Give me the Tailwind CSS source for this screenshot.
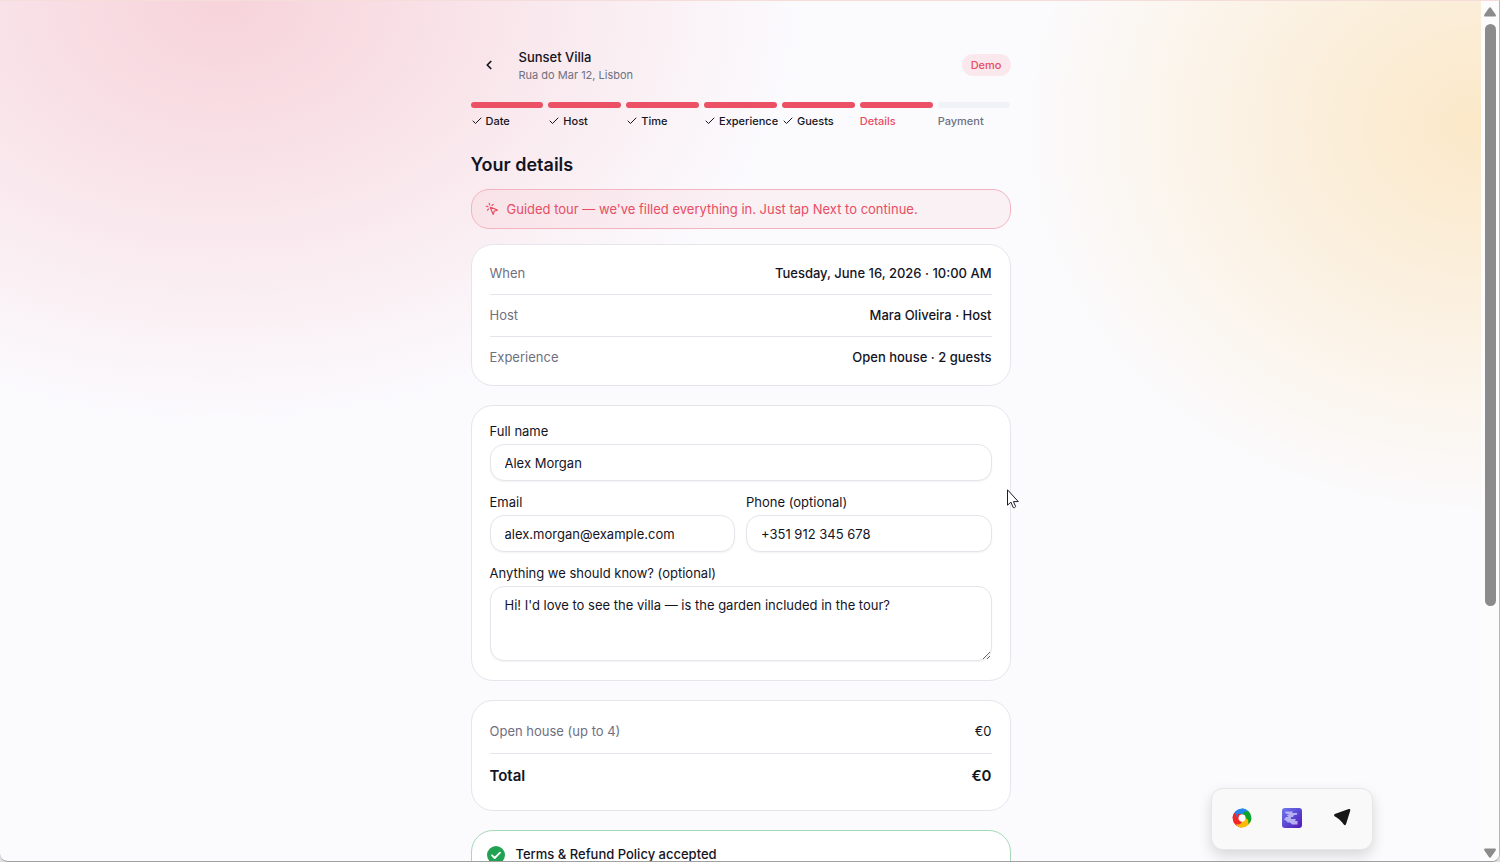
<!DOCTYPE html>
<html lang="en">
<head>
  <meta charset="UTF-8">
  <meta name="viewport" content="width=device-width, initial-scale=1.0">
  <title>Sunset Villa - Your details</title>
  <script src="https://cdn.jsdelivr.net/npm/@tailwindcss/browser@4"></script>
</head>
<body class="bg-[#dedede] font-[Inter,sans-serif] text-[13px] leading-5 text-[#14141f]">
  <div class="relative flex h-screen overflow-hidden rounded-b-lg border-t border-r border-b border-t-[#f5ddd9] border-r-[#b5b5b5] border-b-[#a0a0a0] bg-[#fbfbfe]">

    <!-- Page -->
    <div class="flex-1 overflow-hidden bg-[radial-gradient(590px_430px_at_15%_0px,#f7d3da_0%,#f7d3da00_100%),radial-gradient(470px_400px_at_100%_125px,#fbe8c8_0%,#fbe8c800_100%)]">
      <main class="mx-auto w-full max-w-[540px] pt-[46px]">

        <header class="flex items-center gap-3">
          <button type="button" aria-label="Back" class="flex size-9 items-center justify-center">
            <svg class="size-[14px]" viewBox="0 0 24 24" fill="none" stroke="currentColor" stroke-width="3" stroke-linecap="round" stroke-linejoin="round"><path d="m15 18-6-6 6-6"/></svg>
          </button>
          <div class="flex-1">
            <p class="leading-5 font-medium">Sunset Villa</p>
            <p class="text-[11px] leading-4 text-[#6f7080]">Rua do Mar 12, Lisbon</p>
          </div>
          <span class="rounded-full bg-[#fae8ec] px-[9px] text-[11px] leading-[22px] font-medium text-[#e84d63]">Demo</span>
        </header>

        <!-- Steps -->
        <ol class="mt-[19px] grid grid-cols-7 gap-[5px] text-[11px] leading-4 font-medium">
          <li>
            <div class="h-[6px] rounded-full bg-[#eb5065]"></div>
            <div class="mt-[5px] flex items-center gap-[3px]"><svg class="size-3 shrink-0" viewBox="0 0 24 24" fill="none" stroke="currentColor" stroke-width="2" stroke-linecap="round" stroke-linejoin="round"><path d="M20 6 9 17l-5-5"/></svg>Date</div>
          </li>
          <li>
            <div class="h-[6px] rounded-full bg-[#eb5065]"></div>
            <div class="mt-[5px] flex items-center gap-[3px]"><svg class="size-3 shrink-0" viewBox="0 0 24 24" fill="none" stroke="currentColor" stroke-width="2" stroke-linecap="round" stroke-linejoin="round"><path d="M20 6 9 17l-5-5"/></svg>Host</div>
          </li>
          <li>
            <div class="h-[6px] rounded-full bg-[#eb5065]"></div>
            <div class="mt-[5px] flex items-center gap-[3px]"><svg class="size-3 shrink-0" viewBox="0 0 24 24" fill="none" stroke="currentColor" stroke-width="2" stroke-linecap="round" stroke-linejoin="round"><path d="M20 6 9 17l-5-5"/></svg>Time</div>
          </li>
          <li>
            <div class="h-[6px] rounded-full bg-[#eb5065]"></div>
            <div class="mt-[5px] flex items-center gap-[3px]"><svg class="size-3 shrink-0" viewBox="0 0 24 24" fill="none" stroke="currentColor" stroke-width="2" stroke-linecap="round" stroke-linejoin="round"><path d="M20 6 9 17l-5-5"/></svg>Experience</div>
          </li>
          <li>
            <div class="h-[6px] rounded-full bg-[#eb5065]"></div>
            <div class="mt-[5px] flex items-center gap-[3px]"><svg class="size-3 shrink-0" viewBox="0 0 24 24" fill="none" stroke="currentColor" stroke-width="2" stroke-linecap="round" stroke-linejoin="round"><path d="M20 6 9 17l-5-5"/></svg>Guests</div>
          </li>
          <li>
            <div class="h-[6px] rounded-full bg-[#eb5065]"></div>
            <div class="mt-[5px] text-[#e84d63]">Details</div>
          </li>
          <li>
            <div class="h-[6px] rounded-full bg-[#f1f1f8]"></div>
            <div class="mt-[5px] text-[#6f7080]">Payment</div>
          </li>
        </ol>

        <h1 class="mt-6 text-lg leading-6 font-semibold">Your details</h1>

        <div class="mt-3 flex h-10 items-center gap-2 rounded-[18px] border border-[#f3b3bf] bg-[#eb5065]/6 px-[13px] pb-px text-[#e84d63]">
          <svg class="size-[14px] shrink-0" viewBox="0 0 24 24" fill="none" stroke="currentColor" stroke-width="2" stroke-linecap="round" stroke-linejoin="round"><path d="M14 4.1 12 6"/><path d="m5.1 8-2.9-.8"/><path d="m6 12-1.9 2"/><path d="M7.2 2.2 8 5.1"/><path d="M9.037 9.69a.498.498 0 0 1 .653-.653l11 4.5a.5.5 0 0 1-.074.949l-4.349 1.041a1 1 0 0 0-.74.739l-1.04 4.35a.5.5 0 0 1-.95.074z"/></svg>
          <p>Guided tour — we've filled everything in. Just tap Next to continue.</p>
        </div>

        <!-- Summary -->
        <dl class="mt-[15px] rounded-[22px] border border-[#e5e5ec] bg-white px-[18px] pt-2 pb-[6px]">
          <div class="flex h-[42px] items-center justify-between border-b border-[#e5e5ec] pb-[2px]">
            <dt class="text-[#6f7080]">When</dt>
            <dd class="font-medium">Tuesday, June 16, 2026 · 10:00 AM</dd>
          </div>
          <div class="flex h-[42px] items-center justify-between border-b border-[#e5e5ec] pb-[2px]">
            <dt class="text-[#6f7080]">Host</dt>
            <dd class="font-medium">Mara Oliveira · Host</dd>
          </div>
          <div class="flex h-[42px] items-center justify-between pb-[2px]">
            <dt class="text-[#6f7080]">Experience</dt>
            <dd class="font-medium">Open house · 2 guests</dd>
          </div>
        </dl>

        <!-- Guest details -->
        <form class="mt-[19px] grid grid-cols-2 gap-[11px] rounded-[22px] border border-[#e5e5ec] bg-white px-[18px] pt-[15px] pb-[19px]">
          <div class="col-span-2">
            <label for="name" class="block">Full name</label>
            <input id="name" type="text" value="Alex Morgan" class="mt-[3px] block h-[37px] w-full rounded-[14px] border border-[#e5e5ec] bg-white px-[14px] shadow-xs">
          </div>
          <div>
            <label for="email" class="block">Email</label>
            <input id="email" type="email" value="alex.morgan@example.com" class="mt-[3px] block h-[37px] w-full rounded-[14px] border border-[#e5e5ec] bg-white px-[14px] shadow-xs">
          </div>
          <div>
            <label for="phone" class="block">Phone (optional)</label>
            <input id="phone" type="tel" value="+351 912 345 678" class="mt-[3px] block h-[37px] w-full rounded-[14px] border border-[#e5e5ec] bg-white px-[14px] shadow-xs">
          </div>
          <div class="col-span-2">
            <label for="note" class="block">Anything we should know? (optional)</label>
            <textarea id="note" class="mt-[3px] block h-[75px] w-full resize-y rounded-[14px] border border-[#e5e5ec] bg-white px-[14px] py-2 shadow-xs">Hi! I'd love to see the villa — is the garden included in the tour?</textarea>
          </div>
        </form>

        <!-- Price -->
        <dl class="mt-[19px] rounded-[22px] border border-[#e5e5ec] bg-white px-[18px] py-[9px]">
          <div class="flex h-11 items-center justify-between border-b border-[#e5e5ec] pb-[2px]">
            <dt class="text-[#6f7080]">Open house (up to 4)</dt>
            <dd>€0</dd>
          </div>
          <div class="flex h-[47px] items-center justify-between pb-[3px] text-[15px] font-semibold">
            <dt>Total</dt>
            <dd>€0</dd>
          </div>
        </dl>

        <section class="mt-[19px] flex h-20 items-start gap-[10px] rounded-[22px] border border-[#a5d9b8] bg-white px-[14px] pt-[13px]">
          <svg class="mt-[1px] size-5 shrink-0" viewBox="0 0 20 20" fill="none"><circle cx="10" cy="10" r="9" fill="#21a152"/><path d="m6 10.3 2.7 2.7L14 7.6" stroke="#fff" stroke-width="1.8" stroke-linecap="round" stroke-linejoin="round"/></svg>
          <p class="font-medium">Terms &amp; Refund Policy accepted</p>
        </section>
      </main>
    </div>

    <!-- Scrollbar -->
    <div class="flex w-[18px] flex-col items-center bg-[#fcfcfc] pt-[6px] pb-[3px]">
      <svg class="h-[10px] w-3" viewBox="0 0 12 10" fill="#8b8b8b"><path d="M5.1.8Q6-.2 6.9.8L11.6 7.6Q12.4 9.6 10.8 9.6H1.2Q-.4 9.6.4 7.6Z"/></svg>
      <div class="mt-[7px] w-[11px] flex-12 rounded-full bg-[#8b8b8b]"></div>
      <div class="flex-5"></div>
      <svg class="h-[10px] w-3 rotate-180" viewBox="0 0 12 10" fill="#8b8b8b"><path d="M5.1.8Q6-.2 6.9.8L11.6 7.6Q12.4 9.6 10.8 9.6H1.2Q-.4 9.6.4 7.6Z"/></svg>
    </div>

    <!-- Floating dock -->
    <div class="absolute right-[126px] bottom-[11px] flex h-[62px] w-[162px] items-center justify-between rounded-xl border border-[#e6e6e8] bg-[#f9f9fa] px-5 pb-[2px] shadow-[0_6px_14px_rgba(0,0,0,0.14)]">
      <button type="button" aria-label="Colors">
        <svg class="size-5" viewBox="0 0 20 20" fill="none" stroke-width="6"><path d="M3.6 10A6.4 6.4 0 0 1 10 3.6" stroke="#2586f0"/><path d="M10 3.6A6.4 6.4 0 0 1 16.4 10" stroke="#0ca52b"/><path d="M16.4 10A6.4 6.4 0 0 1 10 16.4" stroke="#fcba08"/><path d="M10 16.4A6.4 6.4 0 0 1 3.6 10" stroke="#f52525"/><g stroke="none"><path d="M10 .6C13 .5 15 2 16 4c-3-1-5 0-6 2.6Z" fill="#2586f0"/><path d="M19.400 10c.1 3-1.400 5-3.400 6 1-3 0-5-2.600-6Z" fill="#0ca52b"/><path d="M10 19.400c-3 .1-5-1.400-6-3.400 3 1 5 0 6-2.600Z" fill="#fcba08"/><path d="M.6 10C.5 7 2 5 4 4c-1 3 0 5 2.600 6Z" fill="#f52525"/><path d="M4 4q3-1.500 6 2.600l-3.400 3.400Q3.500 8 4 4Z" fill="#2586f0"/><path d="M4.500 7q2-2.500 5.500-.4L6.600 10Q5 9 4.500 7Z" fill="#f52525"/></g><circle cx="10" cy="10" r="3.4" fill="#fff" stroke="none"/></svg>
      </button>
      <button type="button" aria-label="Workspace">
        <svg class="size-5" viewBox="0 0 20 20"><defs><linearGradient id="violet" x1="0" y1="0" x2="1" y2="1"><stop stop-color="#6f78ee"/><stop offset=".5" stop-color="#5b49d3"/><stop offset="1" stop-color="#5514b5"/></linearGradient><filter id="soft"><feGaussianBlur stdDeviation=".6"/></filter></defs><rect width="20" height="20" rx="3" fill="url(#violet)"/><path d="M3.500 3.500H11l-1 1.500h5.500l-1 2H12l-1 2H9v2h5l-1 2h2.500v3.500H10l-2-2H5.500l-1-1.500L2 11.500 4 9h2.500L4.500 7h3L3 5Z" fill="#c6c2fa" opacity=".85" filter="url(#soft)"/></svg>
      </button>
      <button type="button" aria-label="Send">
        <svg class="size-5" viewBox="0 0 20 20" fill="#171717"><path d="M16.700 1.100q1.800-.3 1.600 1.400L14 16.200q-.9 1.700-2.200.4Q7.500 10.500 2.600 8.200q-1.400-1.200.2-2.200Z"/></svg>
      </button>
    </div>

    <!-- Pointer -->
    <svg class="absolute top-[488px] left-[1007px] h-[21px] w-3" viewBox="0 0 12 21" fill="#fff" stroke="#1c1c2a" stroke-width="1" stroke-linejoin="round"><path d="M.5.8v15.4l3.4-3.1 2.3 5.4q1.3.9 2.5-.9l-2.3-5h4.9Z"/></svg>
  </div>
</body>
</html>
